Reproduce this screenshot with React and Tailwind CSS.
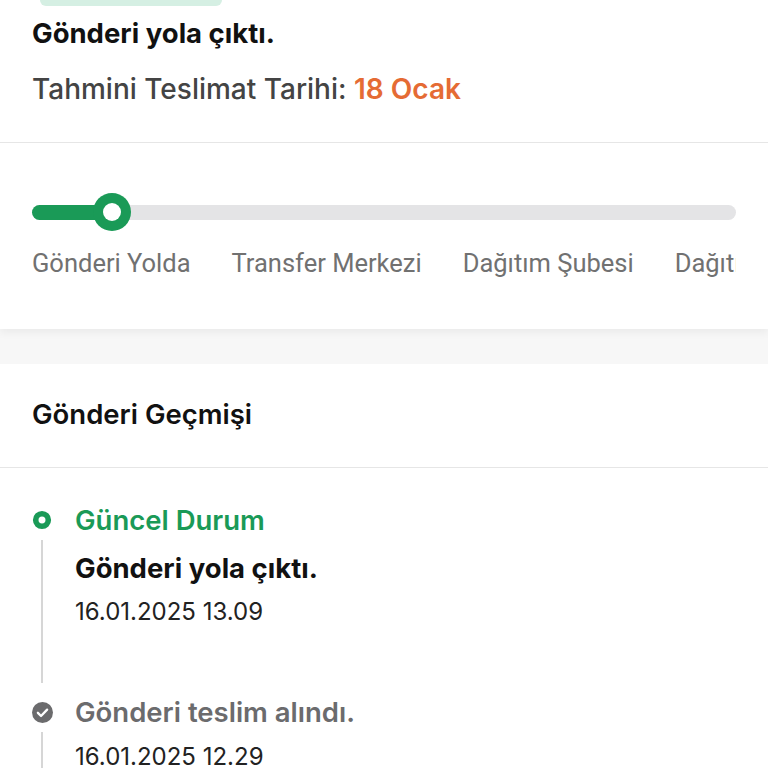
const steps = ["Gönderi Yolda", "Transfer Merkezi", "Dağıtım Şubesi", "Dağıtımda", "Teslim Edildi"];

const history = [
  {
    current: true,
    label: "Güncel Durum",
    title: "Gönderi yola çıktı.",
    date: "16.01.2025 13.09",
  },
  {
    current: false,
    label: "Gönderi teslim alındı.",
    date: "16.01.2025 12.29",
  },
];

function RingIcon() {
  return (
    <svg width="20" height="20" viewBox="0 0 20 20">
      <circle cx="10" cy="10" r="6.3" fill="none" stroke="#1a9a57" strokeWidth="5.6" />
    </svg>
  );
}

function CheckIcon() {
  return (
    <svg width="21" height="21" viewBox="0 0 20 20">
      <circle cx="10" cy="10" r="10" fill="#6b6b6d" />
      <path d="M5.6 10.3l3 3 5.8-6" fill="none" stroke="#fff" strokeWidth="2.2" strokeLinecap="round" strokeLinejoin="round" />
    </svg>
  );
}

export default function App() {
  return (
    <div className="min-h-[768px] w-[768px] overflow-hidden bg-[#f7f7f7] font-['Inter',sans-serif] text-[#111]">
      <div className="relative z-10 bg-white shadow-[0_4px_8px_rgba(0,0,0,0.05)]">
        <div className="border-b border-[#e6e6e6] px-8 pb-[36px]">
          <div className="ml-[8px] h-[6px] w-[182px] rounded-b-[16px] bg-[#d5efe3]" />
          <p className="mt-[10px] text-[27.5px] font-bold leading-[34px]">Gönderi yola çıktı.</p>
          <p className="mt-[22px] text-[28px] font-medium leading-[34px] text-[#444]">
            Tahmini Teslimat Tarihi: <span className="font-semibold text-[#e56b34]">18 Ocak</span>
          </p>
        </div>

        <div className="px-8 pb-[51px] pt-[50px]">
          <div className="relative flex h-[38px] items-center">
            <div className="h-[15px] w-full rounded-full bg-[#e4e4e6]" />
            <div className="absolute left-0 top-[11.5px] h-[15px] w-[80px] rounded-l-full bg-[#1a9a57]" />
            <div className="absolute left-[61px] top-0 flex h-[38px] w-[38px] items-center justify-center rounded-full bg-[#1a9a57]">
              <div className="h-[18px] w-[18px] rounded-full bg-white" />
            </div>
          </div>
          <div className="mt-[17px] flex gap-[41px] overflow-hidden whitespace-nowrap font-['Roboto',sans-serif] text-[25.5px] leading-[30px] text-[#717171]">
            {steps.map((step) => (
              <span className="shrink-0" key={step}>
                {step}
              </span>
            ))}
          </div>
        </div>
      </div>

      <div className="mt-[35px] bg-white">
        <div className="border-b border-[#e6e6e6] px-8 pb-[36px] pt-[33px]">
          <p className="text-[27.5px] font-semibold leading-[34px]">Gönderi Geçmişi</p>
        </div>

        <div className="px-8 pt-[35px]">
          {history.map((item) => (
            <div className="flex gap-[23px]" key={item.date}>
              <div className="flex w-[20px] flex-col items-center">
                <div className="flex h-[34px] items-center">
                  {item.current ? <RingIcon /> : <CheckIcon />}
                </div>
                <div className="mb-[12px] mt-[3px] w-[2px] flex-1 bg-[#d6d6d6]" />
              </div>
              <div className="flex flex-col pb-[68px]">
                <p
                  className={`text-[27.5px] font-semibold leading-[34px] ${
                    item.current ? "text-[#1a9a57]" : "text-[#6b6b6d]"
                  }`}
                >
                  {item.label}
                </p>
                {item.title ? (
                  <p className="mt-[14px] text-[27.5px] font-bold leading-[34px]">{item.title}</p>
                ) : null}
                <p className={`${item.title ? "mt-3" : "mt-[13px]"} text-[24px] leading-[30px] text-[#222]`}>
                  {item.date}
                </p>
              </div>
            </div>
          ))}
        </div>
      </div>
    </div>
  );
}
